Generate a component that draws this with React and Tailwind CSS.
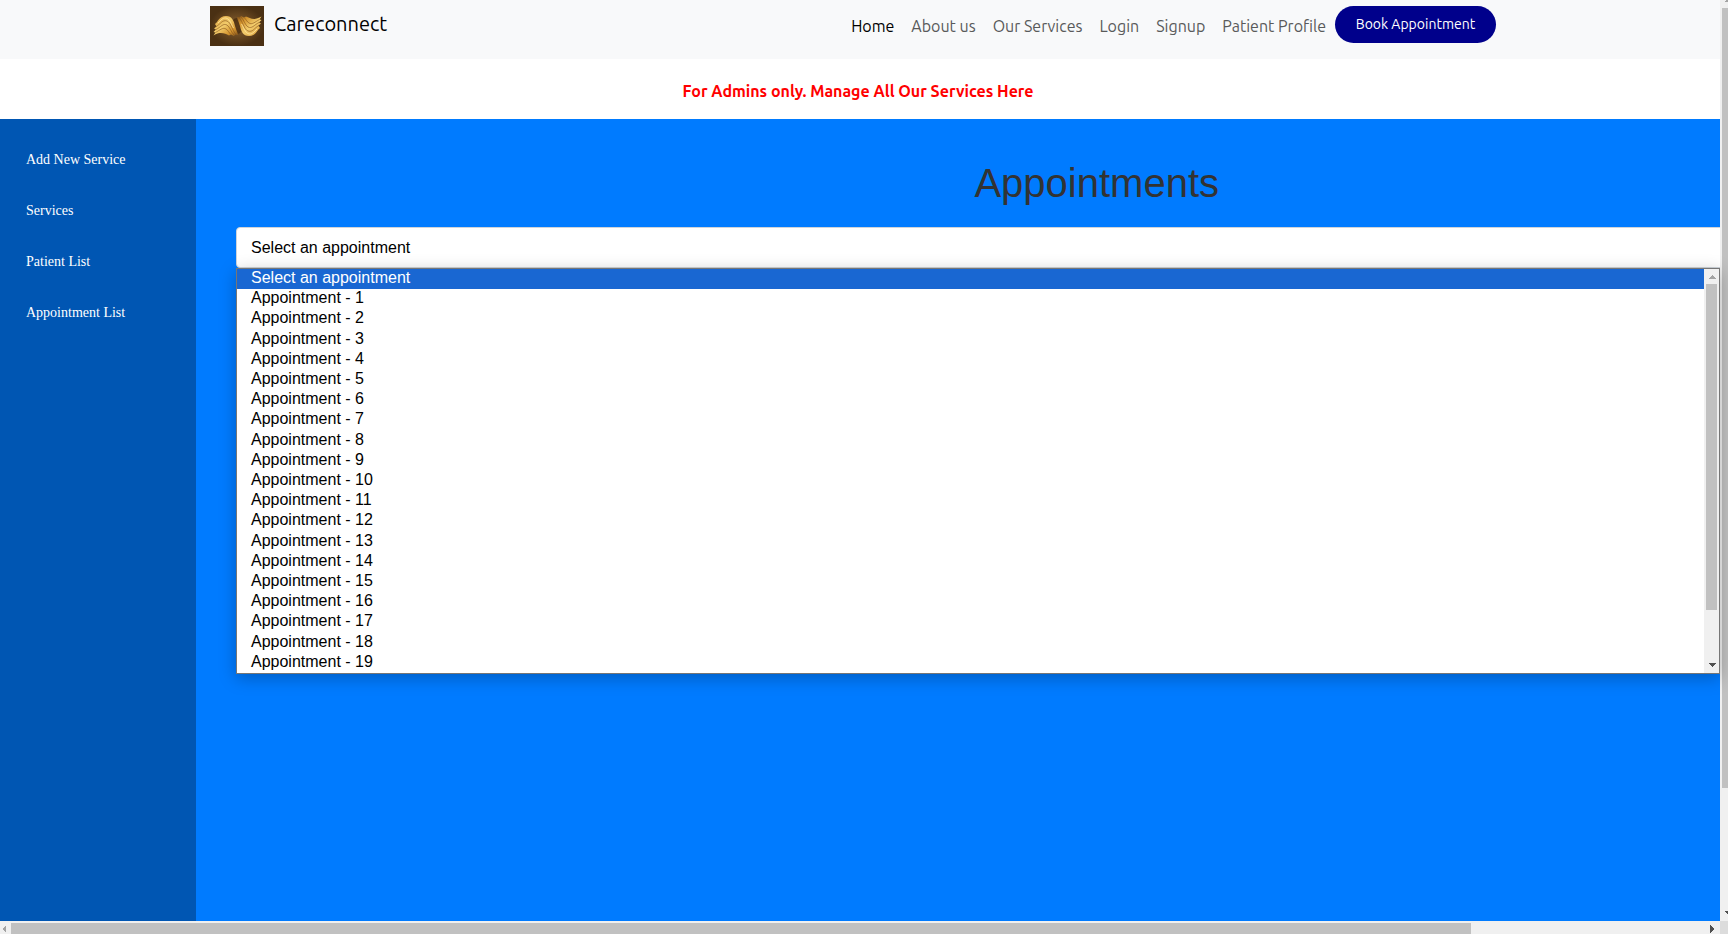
const navLinks = ['Home', 'About us', 'Our Services', 'Login', 'Signup', 'Patient Profile'];
const sideLinks = ['Add New Service', 'Services', 'Patient List', 'Appointment List'];
const options = ['Select an appointment', ...Array.from({ length: 19 }, (_, i) => `Appointment - ${i + 1}`)];

function Arrow({ points, color, className }) {
  return (
    <svg viewBox="0 0 8 8" className={`h-2 w-2 shrink-0 ${className || ''}`} shapeRendering="crispEdges" aria-hidden="true">
      <polygon points={points} fill={color} />
    </svg>
  );
}

const UP = '4,2 8,6 0,6';
const DOWN = '0,2 8,2 4,6';
const LEFT = '6,0 6,8 2,4';
const RIGHT = '2,0 6,4 2,8';

function Feathers() {
  return (
    <g>
      <path
        d="M5 18 C8 16 9 10 16 10 C22 10 24 15 25 20 C26 24 28 27 28 29 L25 28.5 L24 30 L21 28.5 L19 29.5 C15 28 11 25 3.5 29.5 L5.5 26.5 L3.5 26 L6 23.5 L4 22.5 L6.5 20.5 Z"
        fill="url(#gold)"
      />
      <path
        d="M6 20.5 C11 18 12 13.500 17 15 C21 16.500 22 24 26 28.500 M6 23.500 C11 21 13 17 17 19 C20 21 21 26 24 29 M5.500 26.500 C10 24 13 21 16 23 C18 24 19 27 21 28.500"
        fill="none"
        stroke="#84501a"
        strokeWidth="0.6"
      />
      <path d="M8 17 C11 14 13 11.500 16 12 C20 13 21 18 23.500 22" fill="none" stroke="#ffe7a0" strokeWidth="0.8" />
    </g>
  );
}

function Logo() {
  return (
    <svg viewBox="0 0 54 40" className="h-10 w-[54px]" role="img" aria-label="Careconnect logo">
      <defs>
        <radialGradient id="back">
          <stop offset="0" stopColor="#8a6230" />
          <stop offset="1" stopColor="#4a3013" />
        </radialGradient>
        <linearGradient id="gold" x1="0" y1="0" x2="1" y2="1">
          <stop offset="0" stopColor="#d99a35" />
          <stop offset="0.45" stopColor="#f2cc6c" />
          <stop offset="0.75" stopColor="#d4952f" />
          <stop offset="1" stopColor="#7d4d18" />
        </linearGradient>
      </defs>
      <rect width="54" height="40" fill="url(#back)" />
      <ellipse cx="27" cy="20" rx="6" ry="8" fill="#3a2209" opacity="0.6" />
      <Feathers />
      <g transform="rotate(180 27.5 20)">
        <Feathers />
      </g>
    </svg>
  );
}

function Header() {
  return (
    <header className="h-[59px] shrink-0 bg-[#f8f9fa] pr-1">
      <div className="mx-auto flex max-w-[1296px] items-start pt-1.5 pr-2.5">
        <a href="#home" className="flex items-start gap-2.5 text-xl text-black">
          <Logo />
          <span className="leading-9">Careconnect</span>
        </a>
        <nav className="ml-auto flex items-start gap-px">
          {navLinks.map((label) => (
            <a
              key={label}
              href="#page"
              className={`px-2 text-base leading-10 whitespace-nowrap ${label === 'Home' ? 'text-black' : 'text-[#595a5a]'}`}
            >
              {label}
            </a>
          ))}
          <button
            type="button"
            className="h-[37px] w-[161px] rounded-full bg-[#00008b] pb-0.5 text-sm whitespace-nowrap text-white"
          >
            Book Appointment
          </button>
        </nav>
      </div>
    </header>
  );
}

function OptionList() {
  return (
    <div className="absolute top-full right-0 left-10 z-10 flex h-[406px] border border-[#767676] bg-white shadow-[0_4px_16px_rgba(0,0,0,0.25)]">
      <ul role="listbox" aria-label="Appointments" className="flex grow flex-col">
        {options.map((label, i) => (
          <li
            key={label}
            role="option"
            aria-selected={i === 0}
            className={`flex-1 pl-3.5 text-base leading-[18px] ${i === 0 ? 'bg-[#1967d2] text-white' : 'text-black'}`}
          >
            {label}
          </li>
        ))}
      </ul>
      <div className="flex w-[15px] flex-col items-center bg-[#f0f0f0] pt-1 pb-1">
        <Arrow points={UP} color="#a3a3a3" />
        <div className="mt-[3px] h-[326px] w-[11px] bg-[#c1c1c1]" />
        <Arrow points={DOWN} color="#505050" className="mt-auto" />
      </div>
    </div>
  );
}

export default function App() {
  return (
    <div className="flex h-screen flex-col bg-white font-['Ubuntu','Noto_Sans',sans-serif]">
      <div className="flex min-h-0 grow">
        <div className="flex min-w-0 grow flex-col">
          <Header />
          <p className="h-[60px] shrink-0 pt-1 pr-1 text-center text-base leading-[56px] font-bold text-[#ff0000]">
            For Admins only. Manage All Our Services Here
          </p>
          <div className="flex min-h-0 grow">
            <aside className="w-[196px] shrink-0 bg-[#0056b3] pt-[15px] pl-[26px] font-['Liberation_Serif',serif]">
              {sideLinks.map((label) => (
                <a key={label} href="#section" className="block text-sm leading-[51px] text-white">
                  {label}
                </a>
              ))}
            </aside>
            <main className="min-w-0 grow bg-[#007bff] font-['Liberation_Sans',sans-serif]">
              <div className="relative">
                <div className="overflow-hidden pt-10 pl-10">
                  <div className="w-[116%]">
                    <h1 className="mb-5 text-center text-[40px] leading-12 text-[#333333]">Appointments</h1>
                    <select
                      aria-label="Select an appointment"
                      className="block h-[41px] w-full appearance-none rounded-sm border border-[#ced4da] bg-white px-3.5 text-base text-black"
                    >
                      {options.map((label) => (
                        <option key={label}>{label}</option>
                      ))}
                    </select>
                  </div>
                </div>
                <OptionList />
              </div>
            </main>
          </div>
        </div>
        <div className="flex w-2 shrink-0 flex-col overflow-hidden bg-[#f0f0f0] pb-1 pl-0.5">
          <Arrow points={UP} color="#a3a3a3" className="-mt-1 ml-0.5" />
          <div className="mt-1 h-[780px] w-full bg-[#c1c1c1]" />
          <Arrow points={DOWN} color="#505050" className="mt-auto ml-0.5" />
        </div>
      </div>
      <div className="flex h-[13px] shrink-0 bg-[#f0f0f0]">
        <div className="flex grow items-center pt-0.5">
          <Arrow points={LEFT} color="#a3a3a3" className="mr-[3px]" />
          <div className="h-full w-[1460px] bg-[#c1c1c1]" />
          <Arrow points={RIGHT} color="#505050" className="mr-1 ml-auto" />
        </div>
        <div className="w-2 bg-[#dcdcdc]" />
      </div>
    </div>
  );
}
